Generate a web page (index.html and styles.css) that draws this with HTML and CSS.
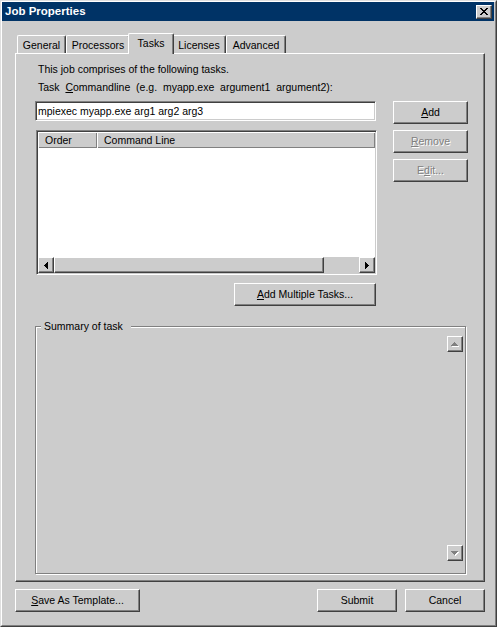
FILE: index.html
```html
<!DOCTYPE html>
<html>
<head>
<meta charset="utf-8">
<title>Job Properties</title>
<link rel="stylesheet" href="styles.css">
</head>
<body>
<div class="window">
  <div class="frame">
    <div class="titlebar">
      <span class="title">Job Properties</span>
      <span class="close raised">
        <svg width="8" height="7" viewBox="0 0 8 7" shape-rendering="crispEdges"><path fill="#000" d="M0 0h2v1h-2z M6 0h2v1h-2z M1 1h2v1h-2z M5 1h2v1h-2z M2 2h4v1h-4z M3 3h2v1h-2z M2 4h4v1h-4z M1 5h2v1h-2z M5 5h2v1h-2z M0 6h2v1h-2z M6 6h2v1h-2z"/></svg>
      </span>
    </div>

    <div class="tabs">
      <div class="tab tab-general">General</div>
      <div class="tab tab-processors">Processors</div>
      <div class="tab tab-tasks selected">Tasks</div>
      <div class="tab tab-licenses">Licenses</div>
      <div class="tab tab-advanced">Advanced</div>
    </div>

    <div class="panel">
      <div class="intro">
        <div class="line">This job comprises of the following tasks.</div>
        <div class="line">Task&nbsp; <u>C</u>ommandline&nbsp; (e.g.&nbsp; myapp.exe&nbsp; argument1&nbsp; argument2):</div>
      </div>

      <div class="task-area">
        <div class="left-col">
          <div class="textfield">mpiexec myapp.exe arg1 arg2 arg3</div>
          <div class="listview">
            <div class="lv-header">
              <div class="lv-col lv-order">Order</div>
              <div class="lv-col lv-cmd">Command Line</div>
            </div>
            <div class="lv-body"></div>
            <div class="hscroll">
              <div class="sb-btn raised">
                <svg width="4" height="7" viewBox="0 0 4 7" shape-rendering="crispEdges"><path fill="#000" d="M0 3h1v1h-1z M1 2h1v3h-1z M2 1h1v5h-1z M3 0h1v7h-1z"/></svg>
              </div>
              <div class="sb-thumb raised"></div>
              <div class="sb-track"></div>
              <div class="sb-btn raised">
                <svg width="4" height="7" viewBox="0 0 4 7" shape-rendering="crispEdges"><path fill="#000" d="M0 0h1v7h-1z M1 1h1v5h-1z M2 2h1v3h-1z M3 3h1v1h-1z"/></svg>
              </div>
            </div>
          </div>
          <div class="btn raised btn-multi"><span><u>A</u>dd Multiple Tasks...</span></div>
        </div>
        <div class="right-col">
          <div class="btn raised btn-side"><span><u>A</u>dd</span></div>
          <div class="btn raised btn-side disabled"><span><u>R</u>emove</span></div>
          <div class="btn raised btn-side disabled"><span>E<u>d</u>it...</span></div>
        </div>
      </div>

      <div class="groupbox">
        <span class="group-label">Summary of task</span>
        <div class="vscroll">
          <div class="arrow-btn raised">
            <svg width="8" height="5" viewBox="0 0 8 5" shape-rendering="crispEdges"><path fill="#fff" transform="translate(1 1)" d="M3 0h1v1h-1z M2 1h3v1h-3z M1 2h5v1h-5z M0 3h7v1h-7z"/><path fill="#808080" d="M3 0h1v1h-1z M2 1h3v1h-3z M1 2h5v1h-5z M0 3h7v1h-7z"/></svg>
          </div>
          <div class="arrow-btn raised">
            <svg width="8" height="5" viewBox="0 0 8 5" shape-rendering="crispEdges"><path fill="#fff" transform="translate(1 1)" d="M0 0h7v1h-7z M1 1h5v1h-5z M2 2h3v1h-3z M3 3h1v1h-1z"/><path fill="#808080" d="M0 0h7v1h-7z M1 1h5v1h-5z M2 2h3v1h-3z M3 3h1v1h-1z"/></svg>
          </div>
        </div>
      </div>
    </div>

    <div class="footer">
      <div class="btn raised btn-save"><span><u>S</u>ave As Template...</span></div>
      <div class="btn raised btn-foot">Submit</div>
      <div class="btn raised btn-foot">Cancel</div>
    </div>
  </div>
</div>
</body>
</html>
```

FILE: styles.css
```css
body {
  margin: 0;
  background: #cccccc;
  font-family: "Liberation Sans", Arial, sans-serif;
  font-size: 10.5px;
  color: #000;
}

.window {
  width: 497px;
  height: 627px;
  box-sizing: border-box;
  border: 1px solid;
  border-color: #dfdfdf #404040 #404040 #dfdfdf;
  background: #cccccc;
}

.frame {
  height: 100%;
  box-sizing: border-box;
  border: 1px solid;
  border-color: #ffffff #808080 #808080 #ffffff;
  display: flex;
  flex-direction: column;
}

.raised {
  box-sizing: border-box;
  border: 1px solid;
  border-color: #ffffff #404040 #404040 #ffffff;
  box-shadow: inset -1px -1px 0 #808080;
  background: #cccccc;
}

/* title bar */
.titlebar {
  height: 19px;
  margin-right: 1px;
  background: #003366;
  display: flex;
  justify-content: space-between;
  align-items: flex-start;
}

.title {
  color: #ffffff;
  font-weight: bold;
  font-size: 11.5px;
  line-height: 19px;
  padding-left: 3px;
}

.close {
  width: 16px;
  height: 14px;
  margin: 3px 2px 0 0;
  display: flex;
  justify-content: center;
  padding-top: 2px;
}

.close svg { display: block; }

/* tabs */
.tabs {
  display: flex;
  align-items: flex-end;
  height: 20px;
  margin: 12px 0 0 15px;
  position: relative;
  z-index: 1;
}

.tab {
  box-sizing: border-box;
  height: 18px;
  border: 1px solid;
  border-bottom: 0;
  border-color: #ffffff #404040 #ffffff #ffffff;
  border-radius: 2px 2px 0 0;
  box-shadow: inset -1px 0 0 #808080;
  background: #cccccc;
  text-align: center;
  line-height: 19px;
  white-space: nowrap;
}

.tab-general { width: 49px; }
.tab-processors { width: 64px; }
.tab-tasks { width: 46px; }
.tab-licenses { width: 54px; }
.tab-advanced { width: 60px; }

.tab.selected {
  height: 21px;
  margin: 0 -2px -1px;
  position: relative;
  z-index: 2;
}

/* panel */
.panel {
  margin-left: 13px;
  width: 470px;
  height: 529px;
  box-sizing: border-box;
  border: 1px solid;
  border-color: #ffffff #404040 #404040 #ffffff;
  box-shadow: inset -1px -1px 0 #808080;
  padding: 6px 0 0 19px;
}

.intro {
  margin-left: 3px;
}

.line {
  line-height: 18px;
  white-space: nowrap;
}

.task-area {
  display: flex;
  margin-top: 5px;
}

.left-col {
  width: 342px;
}

.textfield {
  width: 341px;
  height: 20px;
  box-sizing: border-box;
  background: #ffffff;
  border: 1px solid;
  border-color: #808080 #ffffff #ffffff #808080;
  box-shadow: inset 1px 1px 0 #404040, inset -1px -1px 0 #cccccc;
  padding-left: 2px;
  line-height: 18px;
  white-space: nowrap;
}

.listview {
  margin: 9px 0 0 1px;
  width: 341px;
  height: 145px;
  box-sizing: border-box;
  border: 1px solid;
  border-color: #808080 #ffffff #ffffff #808080;
  box-shadow: inset 1px 1px 0 #404040, inset -1px -1px 0 #cccccc;
  padding: 1px;
  background: #ffffff;
  display: flex;
  flex-direction: column;
}

.lv-header {
  display: flex;
  height: 16px;
  background: #cccccc;
}

.lv-col {
  box-sizing: border-box;
  height: 16px;
  line-height: 16px;
  padding-left: 7px;
  box-shadow: inset 1px 1px 0 #ffffff, inset -1px -1px 0 #808080;
  white-space: nowrap;
}

.lv-order { width: 59px; }
.lv-cmd { flex: 1; }

.lv-body {
  flex: 1;
  background: #ffffff;
}

.hscroll {
  display: flex;
  height: 16px;
  background: #cccccc;
}

.sb-btn {
  width: 16px;
  height: 16px;
  display: flex;
  align-items: center;
  justify-content: center;
}

.sb-btn svg { display: block; }

.sb-thumb {
  width: 270px;
  height: 16px;
}

.sb-track {
  flex: 1;
  background: #cccccc;
}

/* buttons */
.btn {
  height: 23px;
  display: flex;
  justify-content: center;
  line-height: 20px;
  white-space: nowrap;
}

.btn-multi {
  width: 142px;
  margin: 8px 0 0 199px;
}

.right-col {
  margin-left: 16px;
  display: flex;
  flex-direction: column;
  gap: 6px;
}

.btn-side {
  width: 75px;
}

.disabled {
  color: #808080;
  text-shadow: 1px 1px 0 #ffffff;
}

/* summary group */
.groupbox {
  position: relative;
  margin-top: 20px;
  width: 431px;
  height: 248px;
  box-sizing: border-box;
  border: 1px solid #808080;
  box-shadow: inset 1px 1px 0 #ffffff, 1px 1px 0 #ffffff;
  display: flex;
  justify-content: flex-end;
  padding: 9px 2px 12px 0;
}

.group-label {
  position: absolute;
  top: -7px;
  left: 5px;
  padding: 0 8px 0 3px;
  background: #cccccc;
  line-height: 13px;
  white-space: nowrap;
}

.vscroll {
  display: flex;
  flex-direction: column;
  justify-content: space-between;
}

.arrow-btn {
  width: 16px;
  height: 16px;
  display: flex;
  align-items: center;
  justify-content: center;
}

.arrow-btn svg { display: block; }

/* footer */
.footer {
  display: flex;
  gap: 8px;
  margin-top: 7px;
  padding: 0 10px 0 13px;
}

.btn-save {
  width: 125px;
  margin-right: auto;
}

.btn-foot {
  width: 80px;
}
```
